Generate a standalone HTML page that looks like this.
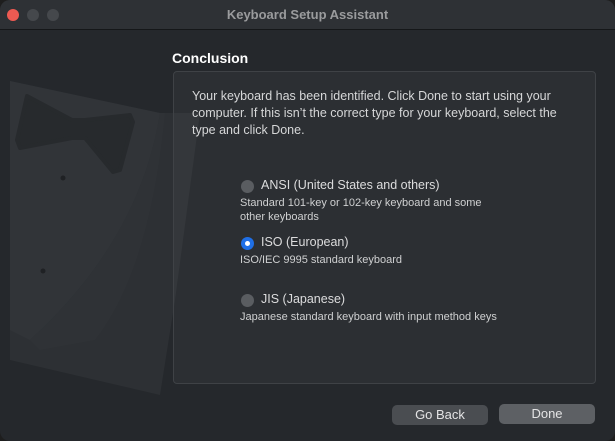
<html><head><style>
body{margin:0;width:615px;height:441px;background:#1e1e1e;font-family:"Liberation Sans",sans-serif;overflow:hidden}
.win{position:absolute;left:0;top:0;width:615px;height:441px;background:#25282c;border-radius:10px;overflow:hidden}
.tb{position:absolute;left:0;top:0;width:615px;height:29px;background:#2e3135;border-bottom:1px solid #151719}
.dot{position:absolute;top:9px;width:12px;height:12px;border-radius:50%;background:#45484c}
.title{position:absolute;top:7px;width:615px;text-align:center;color:#9a9b9d;font-weight:bold;font-size:13px}
h1{position:absolute;left:172px;top:50px;margin:0;font-size:14px;color:#fff;font-weight:bold}
.box{position:absolute;left:173px;top:71px;width:421px;height:311px;border:1px solid #3f4246;border-radius:4px;background:rgba(255,255,255,0.035)}
.p{position:absolute;left:192px;top:88px;width:390px;font-size:12.5px;line-height:17px;color:#d6d7d8}
.r{position:absolute;left:240px;font-size:12.5px;color:#dcdcdd}
.r .rad{position:absolute;left:1px;top:2px;width:13px;height:13px;border-radius:50%;background:#5a5d61}
.r .l{position:absolute;left:21px;top:0;white-space:nowrap}
.r .d{position:absolute;left:0;top:18px;font-size:11px;line-height:14px;white-space:nowrap;color:#cfd0d1}
.btn{position:absolute;height:20px;border-radius:5px;color:#e4e4e5;font-size:13px;text-align:center;line-height:20px}
</style></head><body><div class="win">
<svg style="position:absolute;left:0;top:0" width="230" height="441">
<polygon points="10,81 160,113 200,113 175,300 160,395 10,360" fill="#2d3034"/>
<path d="M10,81 L80,96 L160,113 Q140,240 30,340 L10,330 Z" fill="#313438"/>
<path d="M30,340 Q140,240 160,113 L165,113 Q150,270 95,340 L40,350 Z" fill="#2f3236"/>
<polygon points="27,96 72,120 85,120 130,115 133,122 120,170 113,172 85,138 72,138 20,148 17,140" fill="#272a2d" stroke="#272a2d" stroke-width="4" stroke-linejoin="round"/>
<circle cx="63" cy="178" r="2.5" fill="#1f2124"/><circle cx="43" cy="271" r="2.5" fill="#1f2124"/>
</svg>
<div class="tb"><div class="dot" style="left:7px;background:#ee5a52"></div><div class="dot" style="left:27px"></div><div class="dot" style="left:47px"></div>
<div class="title">Keyboard Setup Assistant</div></div>
<h1>Conclusion</h1>
<div class="box"></div>
<div class="p">Your keyboard has been identified. Click Done to start using your<br>computer. If this isn’t the correct type for your keyboard, select the<br>type and click Done.</div>
<div class="r" style="top:178px"><div class="rad"></div><div class="l">ANSI (United States and others)</div><div class="d">Standard 101-key or 102-key keyboard and some<br>other keyboards</div></div>
<div class="r" style="top:235px"><div class="rad" style="background:#1f6fe6"><div style="position:absolute;left:4px;top:4px;width:5px;height:5px;border-radius:50%;background:#fff"></div></div><div class="l">ISO (European)</div><div class="d">ISO/IEC 9995 standard keyboard</div></div>
<div class="r" style="top:292px"><div class="rad"></div><div class="l">JIS (Japanese)</div><div class="d">Japanese standard keyboard with input method keys</div></div>
<div class="btn" style="left:392px;top:405px;width:96px;background:#4a4d51">Go Back</div>
<div class="btn" style="left:499px;top:404px;width:96px;background:#5d6064">Done</div>
</div></body></html>
